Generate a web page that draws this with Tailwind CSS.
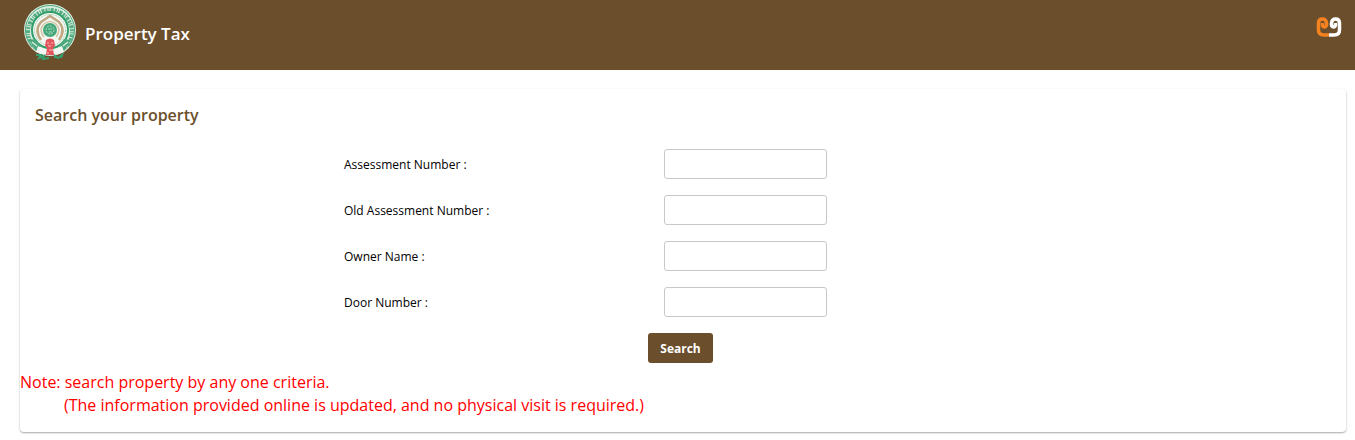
<!DOCTYPE html>
<html lang="en">
<head>
  <meta charset="utf-8">
  <meta name="viewport" content="width=device-width, initial-scale=1">
  <title>Property Tax</title>
  <script src="https://cdn.jsdelivr.net/npm/@tailwindcss/browser@4"></script>
</head>
<body class="bg-white text-black font-['Open_Sans',sans-serif]">

<header class="flex items-start justify-between h-[70px] pl-6 pr-3 bg-[#6b4f2c]">
  <div class="flex items-start">
    <svg class="w-[52px] h-[60px] mt-1" viewBox="0 0 52 60" role="img" aria-label="Government seal">
      <circle cx="26" cy="26" r="26" fill="#dcebe0"/>
      <circle cx="26" cy="26" r="24.500" fill="none" stroke="#48a87b" stroke-width="1"/>
      <!-- lettering band -->
      <path d="M9 42 A22 22 0 1 1 43 42" fill="none" stroke="#54ac82" stroke-width="4" stroke-dasharray="2 1 1 1 3 1"/>
      <circle cx="26" cy="26" r="18" fill="#f4f8f3" stroke="#2f9e6a" stroke-width="2"/>
      <circle cx="26" cy="26" r="15.500" fill="none" stroke="#a8d0b6" stroke-width="1" stroke-dasharray="2 1"/>
      <path d="M17 36 Q10 26 17 18 L26 12 L35 18 Q42 26 35 36" fill="none" stroke="#c1a884" stroke-width="2.500"/>
      <path d="M20 33 Q14 26 20 20 Q26 15 32 20 Q38 26 32 33" fill="none" stroke="#d5c4a5" stroke-width="1.500"/>
      <circle cx="26" cy="26" r="7" fill="#45a87b"/>
      <circle cx="26" cy="26" r="4" fill="none" stroke="#b0d8c2" stroke-width="1" stroke-dasharray="2 1"/>
      <path d="M24 25 h4 M25 28 h3" stroke="#b0d8c2" stroke-width="1"/>
      <path d="M5 36 L12 35 L17 42 L12 47 Z M47 36 L40 35 L35 42 L40 47 Z" fill="#4aa97c"/>
      <path d="M8 38 l5 4 M44 38 l-5 4" stroke="#dcebe0" stroke-width="1.500"/>
      <path d="M14 42 Q26 49 38 42 L40 48 Q26 54 12 48 Z" fill="#f3f7f2"/>
      <path d="M22 36 Q26 33 30 36 L31 42 L29 44 L30 51 H22 L23 44 L21 42 Z" fill="#e2555c"/>
      <path d="M23 39 h2 M27 39 h2 M24 42 h3 M25 46 h4 M23 49 h2" stroke="#f7c3b5" stroke-width="1"/>
      <path d="M12 51 L17 51 L15 54 L20 52 L19 55 L25 54 M31 54 L31 52 L34 54 L38 51 L37 54" fill="none" stroke="#379f6e" stroke-width="2"/>
    </svg>
    <h1 class="ml-[9px] mt-[22px] text-[17px] leading-6 font-semibold text-white">Property Tax</h1>
  </div>
  <svg class="w-[26px] h-5 mt-[17px] mr-px" viewBox="0 0 26 20" fill="none" stroke-width="3.500" role="img" aria-label="eGov">
    <path d="M6.500 6 Q6 10 8.500 10 Q11 9.500 10.500 6 Q10 2 6.500 2 Q2.500 2 2.500 6 V13 Q2.500 18 8 18 H13" stroke="#f58220"/>
    <path d="M19.500 6 Q20 10 17.500 10 Q15 9.500 15.500 6 Q16 2 19.500 2 Q23.500 2 23.500 6 V13 Q23.500 18 18 18 H13" stroke="#fff"/>
  </svg>
</header>

<main class="pt-[19px] pl-5 pr-[9px] pb-2">
  <section class="pb-[15px] rounded-sm bg-white shadow-[0_1px_2px_rgba(0,0,0,0.35)]">
    <h2 class="px-[15px] pt-[14px] text-base leading-6 font-semibold text-[#6b4f2c]">Search your property</h2>

    <form class="pt-[22px] text-xs">
      <div class="grid gap-y-4 pl-[324px]">
        <div class="flex items-center">
          <label class="w-[320px] pt-0.5" for="assessment">Assessment Number :</label>
          <input class="w-[163px] h-[30px] px-2 border border-[#c8c8c8] rounded-[3px]" type="text" id="assessment" name="assessment">
        </div>
        <div class="flex items-center">
          <label class="w-[320px] pt-0.5" for="old-assessment">Old Assessment Number :</label>
          <input class="w-[163px] h-[30px] px-2 border border-[#c8c8c8] rounded-[3px]" type="text" id="old-assessment" name="old-assessment">
        </div>
        <div class="flex items-center">
          <label class="w-[320px] pt-0.5" for="owner">Owner Name :</label>
          <input class="w-[163px] h-[30px] px-2 border border-[#c8c8c8] rounded-[3px]" type="text" id="owner" name="owner">
        </div>
        <div class="flex items-center">
          <label class="w-[320px] pt-0.5" for="door">Door Number :</label>
          <input class="w-[163px] h-[30px] px-2 border border-[#c8c8c8] rounded-[3px]" type="text" id="door" name="door">
        </div>
      </div>
      <div class="flex justify-center pt-4 pr-[5px]">
        <button class="h-[30px] px-3 pt-0.5 rounded-[3px] bg-[#6b4f2c] text-white font-bold" type="submit">Search</button>
      </div>
    </form>

    <div class="pt-2 text-base leading-[23px] text-[#ff0000]">
      <p>Note: search property by any one criteria.</p>
      <p class="pl-11">(The information provided online is updated, and no physical visit is required.)</p>
    </div>
  </section>
</main>

</body>
</html>
